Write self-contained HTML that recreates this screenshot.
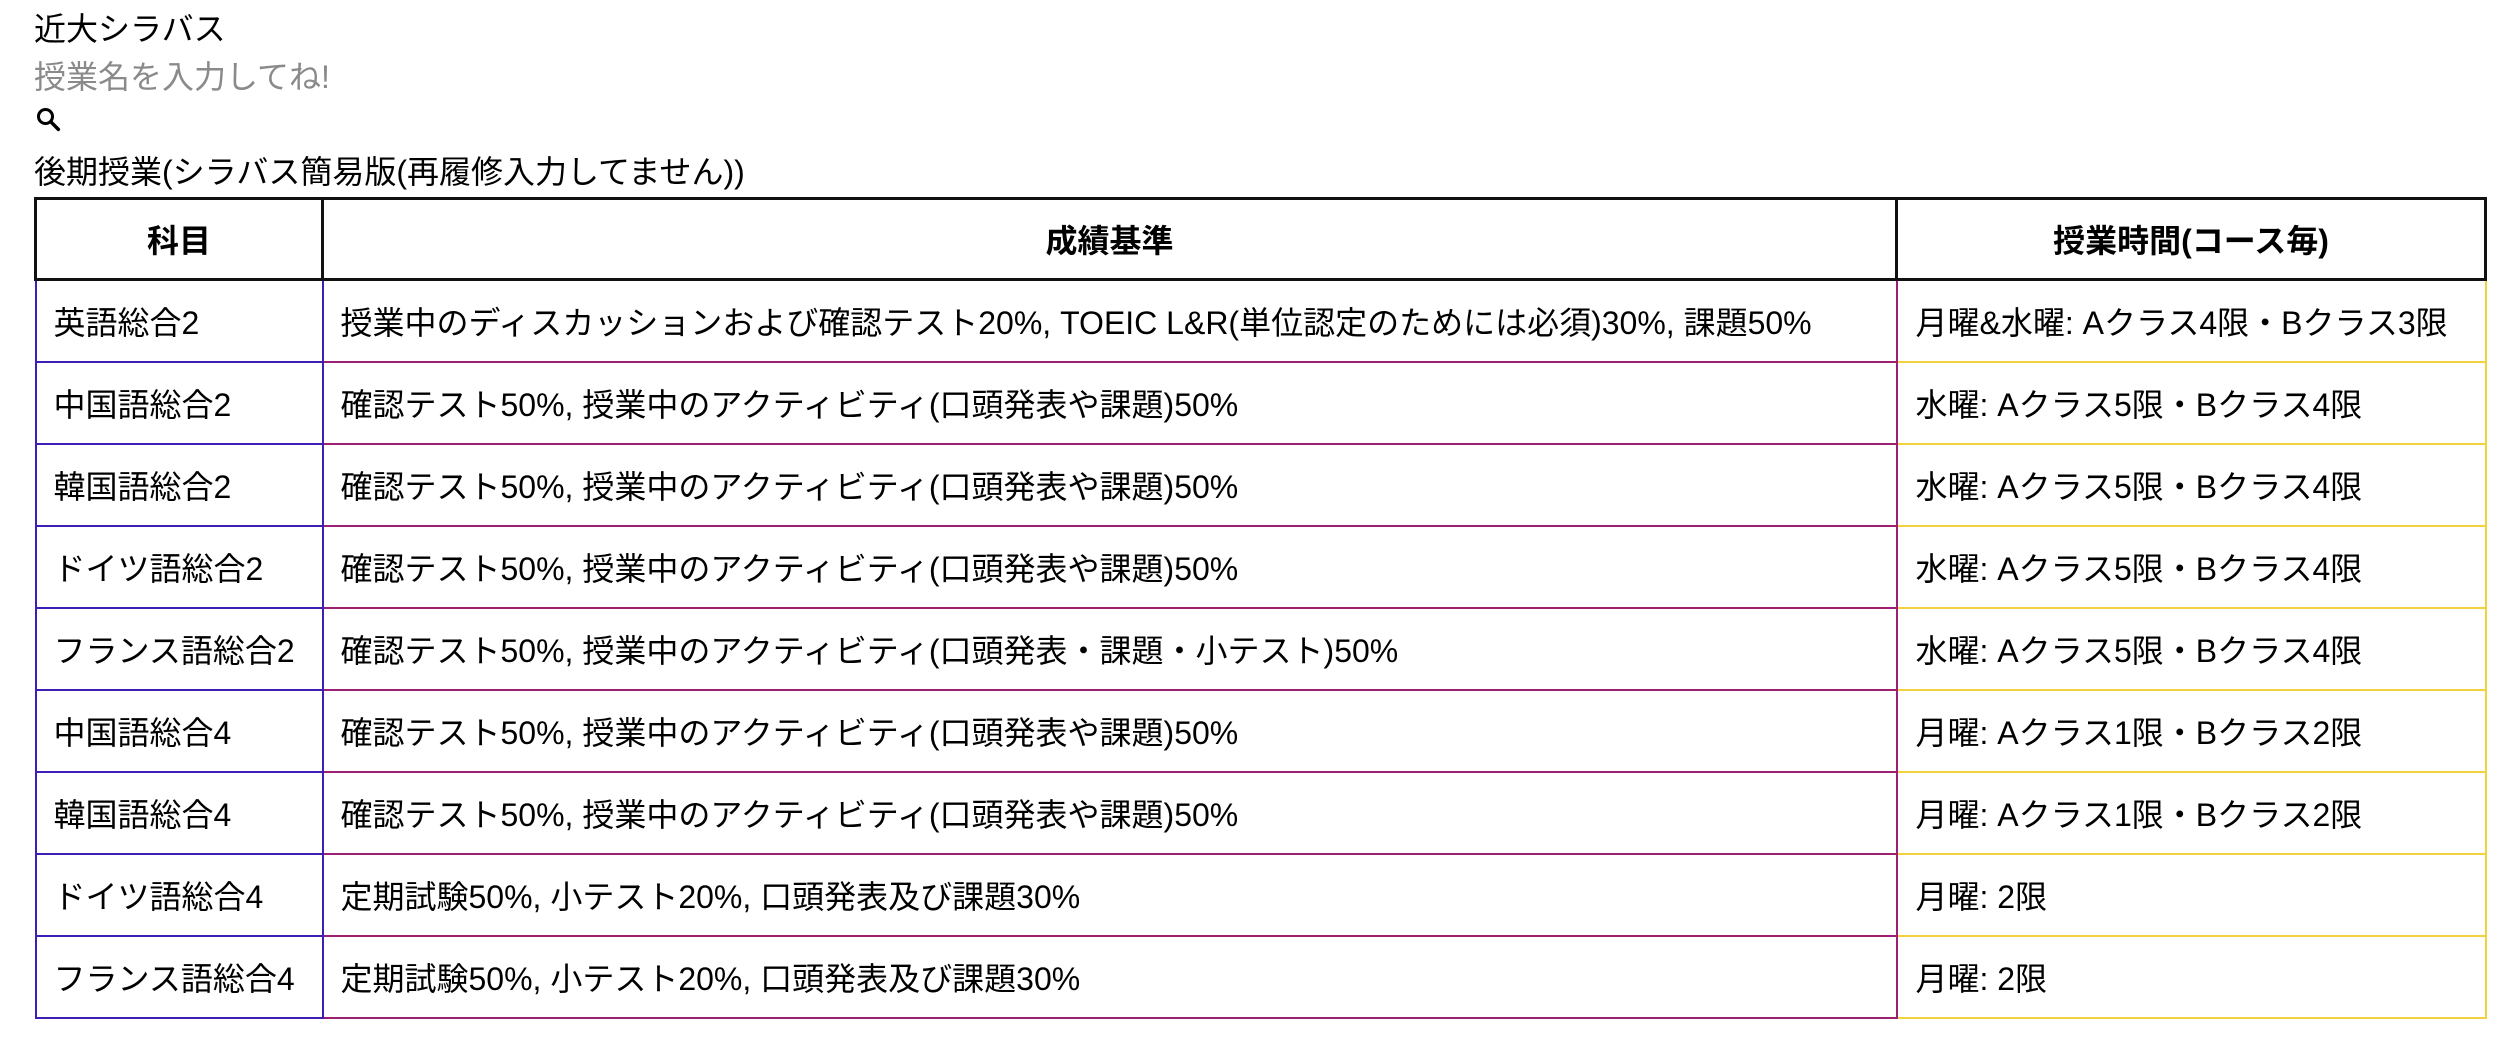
<!DOCTYPE html>
<html><head><meta charset="utf-8">
<style>
html,body{margin:0;padding:0;background:#fff;width:2516px;height:1052px;overflow:hidden}
body{font-family:"Liberation Sans","Noto Sans CJK JP",sans-serif;font-size:32px;color:#000;position:relative}
.a{position:absolute;left:34px;line-height:40px;white-space:nowrap}
table{position:absolute;left:34px;top:197px;width:2450px;border-collapse:collapse;table-layout:fixed}
td,th{height:80px;padding:0 0 0 17px;text-align:left;white-space:nowrap;font-size:32px}
th{border:3px solid #111;text-align:center;padding:0;font-weight:bold;height:78px}
td.c1{border:2px solid #3d1fb5}
td.c2{border:2px solid #9c1f70;padding-left:17px}
td.c3{border:2px solid #f3d03e;padding-left:18px}
</style></head><body>
<div class="a" style="top:9px">近大シラバス</div>
<div class="a" style="top:57px;color:#8a8a8a">授業名を入力してね!</div>
<svg style="position:absolute;left:35px;top:106px" width="28" height="28" viewBox="0 0 24 24"><circle cx="9" cy="9" r="6" fill="none" stroke="#000" stroke-width="2.6"/><path d="M13.5 13.5 L20 20" stroke="#000" stroke-width="3" stroke-linecap="round"/></svg>
<div class="a" style="top:152px">後期授業(シラバス簡易版(再履修入力してません))</div>
<table>
<colgroup><col style="width:287px"><col style="width:1574px"><col style="width:589px"></colgroup>
<tr><th>科目</th><th>成績基準</th><th>授業時間(コース毎)</th></tr>
<tr><td class="c1">英語総合2</td><td class="c2">授業中のディスカッションおよび確認テスト20%, TOEIC L&amp;R(単位認定のためには必須)30%, 課題50%</td><td class="c3">月曜&amp;水曜: Aクラス4限・Bクラス3限</td></tr>
<tr><td class="c1">中国語総合2</td><td class="c2">確認テスト50%, 授業中のアクティビティ(口頭発表や課題)50%</td><td class="c3">水曜: Aクラス5限・Bクラス4限</td></tr>
<tr><td class="c1">韓国語総合2</td><td class="c2">確認テスト50%, 授業中のアクティビティ(口頭発表や課題)50%</td><td class="c3">水曜: Aクラス5限・Bクラス4限</td></tr>
<tr><td class="c1">ドイツ語総合2</td><td class="c2">確認テスト50%, 授業中のアクティビティ(口頭発表や課題)50%</td><td class="c3">水曜: Aクラス5限・Bクラス4限</td></tr>
<tr><td class="c1">フランス語総合2</td><td class="c2">確認テスト50%, 授業中のアクティビティ(口頭発表・課題・小テスト)50%</td><td class="c3">水曜: Aクラス5限・Bクラス4限</td></tr>
<tr><td class="c1">中国語総合4</td><td class="c2">確認テスト50%, 授業中のアクティビティ(口頭発表や課題)50%</td><td class="c3">月曜: Aクラス1限・Bクラス2限</td></tr>
<tr><td class="c1">韓国語総合4</td><td class="c2">確認テスト50%, 授業中のアクティビティ(口頭発表や課題)50%</td><td class="c3">月曜: Aクラス1限・Bクラス2限</td></tr>
<tr><td class="c1">ドイツ語総合4</td><td class="c2">定期試験50%, 小テスト20%, 口頭発表及び課題30%</td><td class="c3">月曜: 2限</td></tr>
<tr><td class="c1">フランス語総合4</td><td class="c2">定期試験50%, 小テスト20%, 口頭発表及び課題30%</td><td class="c3">月曜: 2限</td></tr>
</table>
</body></html>
